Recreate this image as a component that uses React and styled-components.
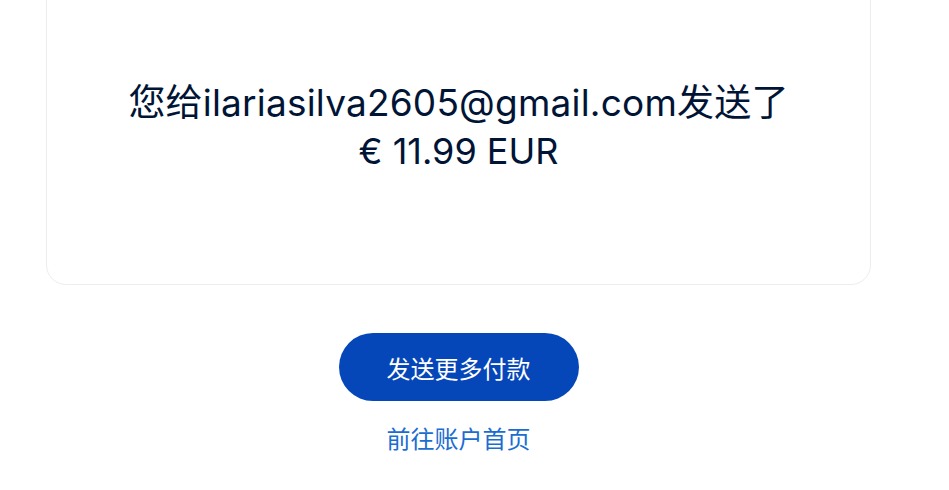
import React from "react";
import styled, { createGlobalStyle } from "styled-components";

const Global = createGlobalStyle`
  html, body { margin: 0; padding: 0; background: #ffffff; }
  body { font-family: Inter, "Noto Sans CJK SC", sans-serif; overflow: hidden; }
`;

const Page = styled.div`
  width: 825px;
  margin-left: 46px;
  display: flex;
  flex-direction: column;
  align-items: center;
`;

const Card = styled.div`
  box-sizing: border-box;
  width: 100%;
  margin-top: -20px;
  padding: 98px 24px 109px;
  border: 1px solid #ededed;
  border-radius: 20px;
  background: #fff;
  display: flex;
  flex-direction: column;
  align-items: center;
`;

const Message = styled.div`
  font-size: ${(p) => (p.$wide ? "37px" : "36px")};
  letter-spacing: ${(p) => (p.$wide ? "0.2px" : "0")};
  line-height: 48px;
  color: #001435;
  text-align: center;
  font-weight: 400;
`;

const Primary = styled.button`
  margin-top: 48px;
  width: 240px;
  height: 68px;
  border: none;
  border-radius: 34px;
  background: #0546b8;
  color: #fff;
  font-family: inherit;
  font-size: 24px;
  font-weight: 400;
  cursor: pointer;
`;

const Link = styled.a`
  margin-top: 23px;
  font-size: 24px;
  line-height: 32px;
  color: #1b6dd0;
  text-decoration: none;
`;

export default function App() {
  return (
    <>
      <Global />
      <Page>
        <Card>
          <Message $wide>您给ilariasilva2605@gmail.com发送了</Message>
          <Message>€ 11.99 EUR</Message>
        </Card>
        <Primary>发送更多付款</Primary>
        <Link href="#">前往账户首页</Link>
      </Page>
    </>
  );
}
